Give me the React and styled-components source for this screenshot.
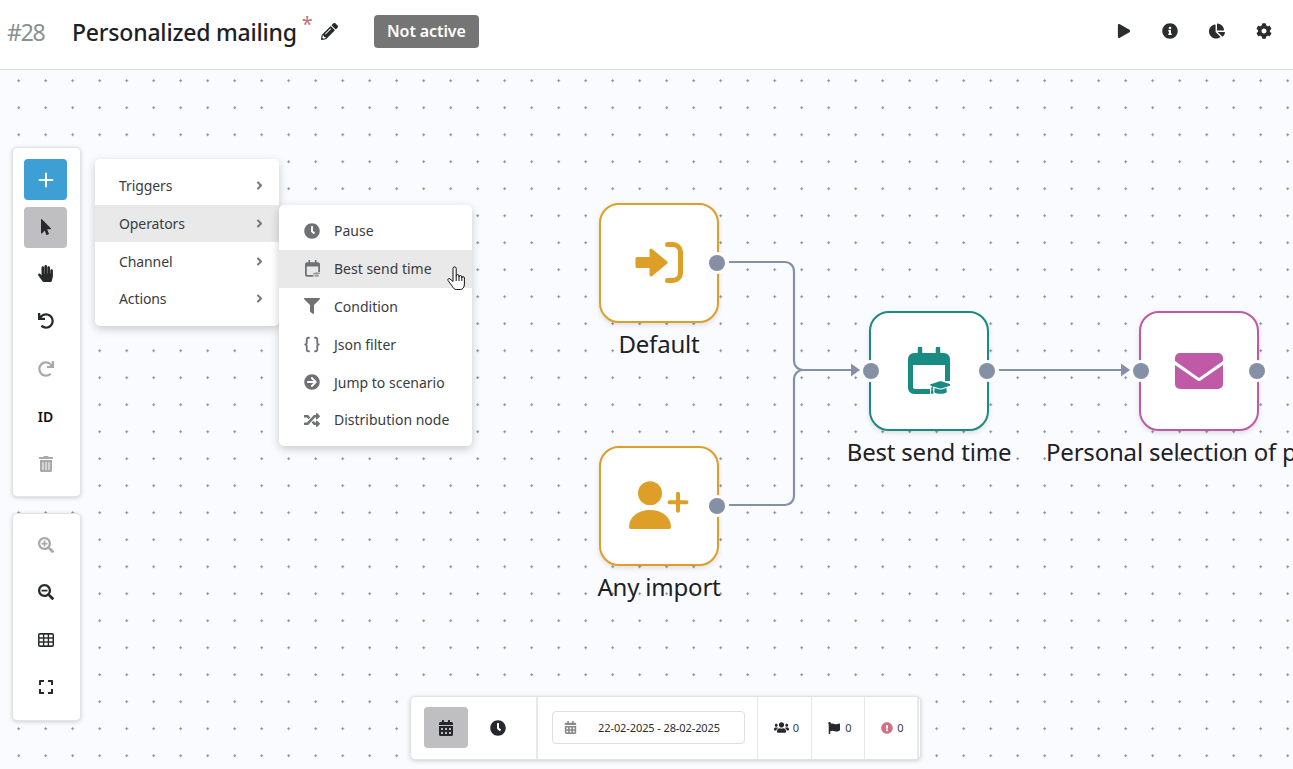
import React from "react";
import styled, { createGlobalStyle } from "styled-components";
import {
  FaPlay, FaInfoCircle, FaChartPie, FaCog, FaPencilAlt, FaMousePointer, FaHandPaper,
  FaUndo, FaRedo, FaTrashAlt, FaSearchPlus, FaSearchMinus, FaExpand, FaCalendarAlt,
  FaClock, FaUsers, FaFlag, FaExclamationCircle, FaFilter, FaArrowCircleRight, FaRandom,
  FaAngleRight, FaGraduationCap,
} from "react-icons/fa";
import { Braces, Plus } from "lucide-react";

const font = `"Noto Sans", "Open Sans", sans-serif`;
const orange = "#dd9f28";
const teal = "#1a8b83";
const pink = "#c05aa6";
const portColor = "#858fa5";

const Global = createGlobalStyle`
  html, body { margin: 0; padding: 0; height: 100%; overflow: hidden; }
  body { font-family: ${font}; color: #2b2d30; }
`;

const Page = styled.div`
  display: flex;
  flex-direction: column;
  height: 100vh;
  overflow: hidden;
`;

const Header = styled.header`
  height: 70px;
  flex-shrink: 0;
  box-sizing: border-box;
  background: #fff;
  border-bottom: 1px solid #dcdcdc;
  display: flex;
  align-items: center;
  padding: 0 21px 6px 7px;
`;

const Number = styled.span`
  font-size: 23px;
  color: #87918f;
  width: 65px;
  letter-spacing: -1.2px;
`;

const Title = styled.h1`
  margin: 0;
  font-size: 23px;
  font-weight: 500;
  color: #1d2125;
  letter-spacing: -0.2px;
`;

const Star = styled.span`
  color: #c96c80;
  font-size: 20px;
  margin: -17px 0 0 5px;
`;

const Pencil = styled(FaPencilAlt)`
  font-size: 17px;
  margin: 0 36px 0 8px;
  color: #26282b;
`;

const Status = styled.span`
  height: 33px;
  width: 105px;
  margin-top: -1px;
  border-radius: 4px;
  background: #757575;
  color: #fff;
  font-size: 16px;
  font-weight: 600;
  letter-spacing: -0.1px;
  display: flex;
  align-items: center;
  justify-content: center;
`;

const HeaderActions = styled.div`
  margin-left: auto;
  margin-top: -1px;
  display: flex;
  align-items: center;
  gap: 31px;
  font-size: 16px;
  color: #2b2d30;
  svg { display: block; }
`;

const Canvas = styled.main`
  position: relative;
  flex: 1;
  overflow: hidden;
  background-color: #fafbfe;
  background-image: radial-gradient(circle, #8f9296 1px, transparent 1.4px);
  background-size: 27px 27px;
  background-position: 5.2px -2.8px;
`;

const Panel = styled.div`
  position: absolute;
  left: 11.5px;
  top: ${(p) => p.$top}px;
  width: 69px;
  height: ${(p) => p.$height}px;
  box-sizing: border-box;
  background: #fff;
  border: 1px solid #e3e3e6;
  border-radius: 5px;
  box-shadow: 0 1px 4px rgba(0, 0, 0, 0.18);
  padding: 11.5px 11.5px 0;
  display: flex;
  flex-direction: column;
  gap: 6.500px;
`;

const ToolButton = styled.button`
  width: 43px;
  height: 41px;
  flex-shrink: 0;
  padding: 0 0 ${(p) => (p.$primary || p.$active ? 0 : 1.5)}px;
  border: 0;
  border-radius: 4px;
  background: ${(p) => (p.$primary ? "#3d9fd3" : p.$active ? "#bfbfc1" : "transparent")};
  color: ${(p) => (p.$primary ? "#fff" : p.$disabled ? "#a9a9a9" : "#26282b")};
  font: 700 16px ${font};
  display: flex;
  align-items: center;
  justify-content: center;
`;

const IdLabel = styled.span`
  font-size: 14px;
  font-weight: 600;
  color: #111;
`;

const Menu = styled.ul`
  position: absolute;
  list-style: none;
  margin: 0;
  left: ${(p) => p.$left}px;
  top: ${(p) => p.$top}px;
  width: ${(p) => p.$width}px;
  padding: ${(p) => p.$pad}px 0;
  background: #fff;
  border-radius: 5px;
  box-shadow: 0 3px 10px rgba(0, 0, 0, 0.2);
  z-index: ${(p) => p.$z};
`;

const MenuItem = styled.li`
  height: 37.7px;
  display: flex;
  align-items: center;
  padding: 0 13px 0 24px;
  font-size: 14px;
  letter-spacing: -0.1px;
  color: #3a3c40;
  background: ${(p) => (p.$hover ? "#e9e9e9" : "transparent")};
  justify-content: space-between;
  svg { color: #77797d; font-size: 13px; }
`;

const SubItem = styled.li`
  position: relative;
  height: 37.8px;
  display: flex;
  align-items: center;
  gap: 13px;
  padding-left: 24px;
  font-size: 14px;
  letter-spacing: 0;
  color: #3a3c40;
  background: ${(p) => (p.$hover ? "#e9e9e9" : "transparent")};
`;

const SubIcon = styled.span`
  width: 18px;
  display: flex;
  justify-content: center;
  color: #707174;
  font-size: 16px;
`;

const CursorSvg = styled.svg`
  position: absolute;
  left: 168px;
  top: 16px;
`;

const Wires = styled.svg`
  position: absolute;
  left: 0;
  top: 0;
  width: 100%;
  height: 100%;
  fill: none;
  stroke: ${portColor};
  stroke-width: 2.2;
`;

const NodeWrap = styled.div`
  position: absolute;
  left: ${(p) => p.$x}px;
  top: ${(p) => p.$y}px;
  width: 120px;
  display: flex;
  flex-direction: column;
  align-items: center;
`;

const NodeBox = styled.div`
  position: relative;
  width: 120px;
  height: 120px;
  box-sizing: border-box;
  background: #fff;
  border: 2px solid ${(p) => p.$color};
  border-radius: 20px;
  box-shadow: 0 2px 5px rgba(0, 0, 0, 0.12);
  display: flex;
  align-items: center;
  justify-content: center;
`;

const Port = styled.span`
  position: absolute;
  top: 50%;
  ${(p) => (p.$side === "left" ? "left: -8px;" : "right: -8px;")}
  width: 16px;
  height: 16px;
  margin-top: -8px;
  border-radius: 50%;
  background: ${portColor};
  box-shadow: 0 0 0 3px #fff;
`;

const NodeLabel = styled.div`
  margin-top: 4.500px;
  font-size: 24px;
  line-height: 33px;
  letter-spacing: -0.2px;
  color: #1d2125;
  white-space: nowrap;
  ${(p) => p.$startAt !== undefined && `align-self: flex-start; margin-left: ${p.$startAt}px;`}
`;

const BottomBar = styled.div`
  position: absolute;
  left: 409.5px;
  top: 625.7px;
  width: 511px;
  height: 64px;
  box-sizing: border-box;
  background: #fff;
  border: 1px solid #e3e3e6;
  border-radius: 5px;
  box-shadow: 0 1px 4px rgba(0, 0, 0, 0.18);
  display: flex;
`;

const BarSection = styled.div`
  display: flex;
  align-items: center;
  justify-content: ${(p) => p.$justify || "center"};
  gap: ${(p) => p.$gap || 0}px;
  width: ${(p) => p.$width}px;
  flex-shrink: 0;
  box-sizing: border-box;
  padding-left: ${(p) => p.$padLeft || 0}px;
  border-right: ${(p) => p.$line || 1}px solid #e8e8e8;
  font-size: 11px;
  color: #3a3c40;
`;

const ViewToggle = styled.button`
  width: 44px;
  height: 41px;
  padding: 0;
  border: 0;
  border-radius: 4px;
  background: ${(p) => (p.$active ? "#bfbfc1" : "transparent")};
  color: #26282b;
  font-size: 16px;
  display: flex;
  align-items: center;
  justify-content: center;
`;

const DateField = styled.div`
  width: 193px;
  height: 33px;
  box-sizing: border-box;
  border: 1px solid #dedede;
  border-radius: 4px;
  display: flex;
  align-items: center;
  padding: 0 11px;
  font-size: 11px;
  letter-spacing: -0.1px;
  color: #2b2d30;
  svg { color: #8a8a8a; font-size: 13px; flex-shrink: 0; }
`;

const DateText = styled.span`
  flex: 1;
  text-align: center;
  padding-left: 9px;
`;

const StatIcon = styled.span`
  display: flex;
  font-size: ${(p) => p.$size || 12}px;
  color: ${(p) => p.$color || "#26282b"};
`;

const LoginIcon = () => (
  <svg width="48" height="41" viewBox="0 0 48 41">
    <path d="M2 16.500H16V8L31 20.500 16 33V24.500H2Z" fill={orange} stroke={orange} strokeWidth="3" strokeLinejoin="round" />
    <path d="M32.500 2.500H38a7.500 7.500 0 0 1 7.500 7.500V31a7.500 7.500 0 0 1-7.500 7.500H32.500" fill="none" stroke={orange} strokeWidth="5" strokeLinecap="round" />
  </svg>
);

const PersonPlusIcon = () => (
  <svg width="60" height="50" viewBox="0 0 60 50" fill={orange}>
    <circle cx="21" cy="12.300" r="12" />
    <path d="M0 46C0 36 9 29 21 29S42 36 42 46a2 2 0 0 1-2 2H2a2 2 0 0 1-2-2Z" />
    <path d="M40.500 21.300H57.500M49 12.800V29.800" stroke={orange} strokeWidth="4" strokeLinecap="round" fill="none" />
  </svg>
);

const CalendarCapIcon = ({ size = 42, color = teal, capColor = teal }) => (
  <svg width={size} height={size * 48 / 42} viewBox="0 0 42 48">
    <path d="M12 1.500v8M30 1.500v8" stroke={color} strokeWidth="4.500" strokeLinecap="round" />
    <path d="M6 6h30a6 6 0 0 1 6 6v22H37V18H5v22a2 2 0 0 0 2 2h15v5H6a6 6 0 0 1-6-6V12a6 6 0 0 1 6-6Z" fill={color} />
    <FaGraduationCap x="22" y="30" size="21" color={capColor} />
  </svg>
);

const MailIcon = () => (
  <svg width="48" height="36" viewBox="0 0 48 36">
    <path d="M5 0h38a5 5 0 0 1 5 5v3L24 25 0 8V5a5 5 0 0 1 5-5Z" fill={pink} />
    <path d="M0 12 22.500 27.500c1 .7 2 .7 3 0L48 12v19a5 5 0 0 1-5 5H5a5 5 0 0 1-5-5V12Z" fill={pink} />
  </svg>
);

const GridIcon = () => (
  <svg width="16" height="14" viewBox="0 0 16 14">
    <rect width="16" height="14" rx="2" fill="currentColor" />
    {[1.5, 6.3, 11.1].map((x) =>
      [1.7, 5.7, 9.7].map((y) => (
        <rect key={`${x}-${y}`} x={x} y={y} width="3.400" height="2.600" fill="#fff" />
      ))
    )}
  </svg>
);

const HandCursor = () => (
  <CursorSvg width="18" height="24" viewBox="0 0 18 24" fill="#fff" stroke="#111" strokeWidth="1">
    <path d="M6 14V2.500a1.600 1.600 0 0 1 3.200 0V10a1.400 1.400 0 0 1 2.800 0V11a1.400 1.400 0 0 1 2.800 0V12a1.300 1.300 0 0 1 2.600 0V18c0 3-1.500 5.500-4 5.500H9.500c-2 0-3-1-4-3L1 14.500c-.8-1.200.8-2.600 2-1.600L6 15.500Z" strokeLinejoin="round" />
    <path d="M9.200 10V15M12 11V15M14.800 12V15" fill="none" />
  </CursorSvg>
);

const FlowNode = ({ x, y, color, label, labelStart, ports, children }) => (
  <NodeWrap $x={x} $y={y}>
    <NodeBox $color={color}>
      {children}
      {ports.map((side) => (
        <Port key={side} $side={side} />
      ))}
    </NodeBox>
    <NodeLabel $startAt={labelStart}>{label}</NodeLabel>
  </NodeWrap>
);

const mainItems = ["Triggers", "Operators", "Channel", "Actions"];

const subItems = [
  { label: "Pause", icon: <FaClock /> },
  { label: "Best send time", icon: <CalendarCapIcon size={15} color="#707174" capColor="#9a9a9c" />, hover: true },
  { label: "Condition", icon: <FaFilter /> },
  { label: "Json filter", icon: <Braces size={19} strokeWidth={2.4} /> },
  { label: "Jump to scenario", icon: <FaArrowCircleRight /> },
  { label: "Distribution node", icon: <FaRandom /> },
];

export default function App() {
  return (
    <Page>
      <Global />
      <Header>
        <Number>#28</Number>
        <Title>Personalized mailing</Title>
        <Star>*</Star>
        <Pencil />
        <Status>Not active</Status>
        <HeaderActions>
          <FaPlay size={14} />
          <FaInfoCircle />
          <FaChartPie />
          <FaCog />
        </HeaderActions>
      </Header>
      <Canvas>
        <Wires>
          <path d="M729 192H785a9 9 0 0 1 9 9V291a9 9 0 0 0 9 9H852" />
          <path d="M729 435H785a9 9 0 0 0 9-9V309a9 9 0 0 1 9-9H852" />
          <path d="M999 300H1122" />
          <path d="M851 293.500 860 300 851 306.500Z" fill={portColor} stroke="none" />
          <path d="M1121 293.500 1130 300 1121 306.500Z" fill={portColor} stroke="none" />
        </Wires>

        <FlowNode x={599} y={132.5} color={orange} label="Default" ports={["right"]}>
          <LoginIcon />
        </FlowNode>
        <FlowNode x={599} y={375.5} color={orange} label="Any import" ports={["right"]}>
          <PersonPlusIcon />
        </FlowNode>
        <FlowNode x={869} y={240.5} color={teal} label="Best send time" ports={["left", "right"]}>
          <CalendarCapIcon />
        </FlowNode>
        <FlowNode x={1139} y={240.5} color={pink} label="Personal selection of products" labelStart={-93} ports={["left", "right"]}>
          <MailIcon />
        </FlowNode>

        <Panel $top={76.5} $height={350}>
          <ToolButton $primary><Plus size={22} strokeWidth={2.2} /></ToolButton>
          <ToolButton $active><FaMousePointer /></ToolButton>
          <ToolButton><FaHandPaper size={17} /></ToolButton>
          <ToolButton><FaUndo /></ToolButton>
          <ToolButton $disabled><FaRedo /></ToolButton>
          <ToolButton><IdLabel>ID</IdLabel></ToolButton>
          <ToolButton $disabled><FaTrashAlt /></ToolButton>
        </Panel>
        <Panel $top={442.5} $height={208}>
          <ToolButton $disabled><FaSearchPlus /></ToolButton>
          <ToolButton><FaSearchMinus /></ToolButton>
          <ToolButton><GridIcon /></ToolButton>
          <ToolButton><FaExpand /></ToolButton>
        </Panel>

        <Menu $left={95} $top={89} $width={184} $pad={8} $z={2}>
          {mainItems.map((item) => (
            <MenuItem key={item} $hover={item === "Operators"}>
              {item}
              <FaAngleRight />
            </MenuItem>
          ))}
        </Menu>
        <Menu $left={279} $top={135} $width={193} $pad={7} $z={3}>
          {subItems.map((item) => (
            <SubItem key={item.label} $hover={item.hover}>
              <SubIcon>{item.icon}</SubIcon>
              {item.label}
              {item.hover && <HandCursor />}
            </SubItem>
          ))}
        </Menu>

        <BottomBar>
          <BarSection $width={127} $justify="flex-start" $padLeft={13} $gap={8} $line={2}>
            <ViewToggle $active><FaCalendarAlt /></ViewToggle>
            <ViewToggle><FaClock /></ViewToggle>
          </BarSection>
          <BarSection $width={220} $padLeft={2}>
            <DateField>
              <FaCalendarAlt />
              <DateText>22-02-2025 - 28-02-2025</DateText>
            </DateField>
          </BarSection>
          <BarSection $width={54} $gap={4} $padLeft={5}>
            <StatIcon $size={15}><FaUsers /></StatIcon>0
          </BarSection>
          <BarSection $width={53} $gap={5} $padLeft={5}>
            <StatIcon><FaFlag /></StatIcon>0
          </BarSection>
          <BarSection $width={54} $gap={4} $padLeft={4} $line={2}>
            <StatIcon $color="#cf7384"><FaExclamationCircle /></StatIcon>0
          </BarSection>
        </BottomBar>
      </Canvas>
    </Page>
  );
}
